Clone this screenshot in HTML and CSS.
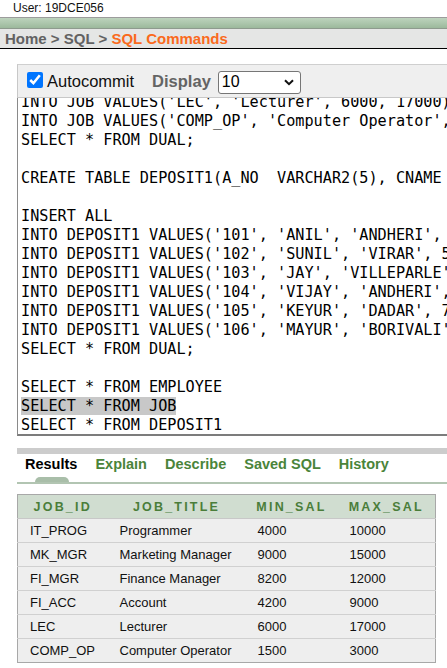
FILE: index.html
```html
<!DOCTYPE html>
<html>
<head>
<meta charset="utf-8">
<link rel="stylesheet" href="styles.css">
</head>
<body>
<div class="user">User: 19DCE056</div>
<div class="greenbar"></div>
<div class="crumbs"><span class="crumb">Home &gt; SQL &gt; </span><span class="crumb-current">SQL Commands</span></div>

<div class="main">
  <div class="toolbar">
    <input type="checkbox" class="check" checked>
    <span class="autocommit">Autocommit</span>
    <span class="display">Display</span>
    <div class="select"><span>10</span><svg class="chev" width="10" height="7" viewBox="0 0 10 7"><path d="M1 1.2 L5 5.2 L9 1.2" fill="none" stroke="#111" stroke-width="2"/></svg></div>
  </div>
  <div class="editor"><pre class="code">INTO JOB VALUES('LEC', 'Lecturer', 6000, 17000)
INTO JOB VALUES('COMP_OP', 'Computer Operator', 1500, 3000)
SELECT * FROM DUAL;

CREATE TABLE DEPOSIT1(A_NO  VARCHAR2(5), CNAME VARCHAR2(15), BNAME VARCHAR2(10))

INSERT ALL
INTO DEPOSIT1 VALUES('101', 'ANIL', 'ANDHERI', 7000, '01-JAN-06')
INTO DEPOSIT1 VALUES('102', 'SUNIL', 'VIRAR', 5000, '15-JUL-06')
INTO DEPOSIT1 VALUES('103', 'JAY', 'VILLEPARLE', 6500, '12-MAR-06')
INTO DEPOSIT1 VALUES('104', 'VIJAY', 'ANDHERI', 8000, '17-SEP-06')
INTO DEPOSIT1 VALUES('105', 'KEYUR', 'DADAR', 7500, '19-NOV-06')
INTO DEPOSIT1 VALUES('106', 'MAYUR', 'BORIVALI', 5500, '21-DEC-06')
SELECT * FROM DUAL;

SELECT * FROM EMPLOYEE
<span class="sel">SELECT * FROM JOB</span>
SELECT * FROM DEPOSIT1</pre></div>

  <div class="tabs-bar"></div>
  <div class="tabs">
    <span class="tab active">Results</span>
    <span class="tab">Explain</span>
    <span class="tab">Describe</span>
    <span class="tab">Saved SQL</span>
    <span class="tab">History</span>
  </div>
  <div class="tab-indicator"></div>
  <div class="tab-line"></div>

  <table class="results">
    <colgroup><col class="c1"><col class="c2"><col class="c3"><col class="c4"></colgroup>
    <thead>
      <tr><th>JOB_ID</th><th>JOB_TITLE</th><th>MIN_SAL</th><th>MAX_SAL</th></tr>
    </thead>
    <tbody>
      <tr><td>IT_PROG</td><td>Programmer</td><td>4000</td><td>10000</td></tr>
      <tr><td>MK_MGR</td><td>Marketing Manager</td><td>9000</td><td>15000</td></tr>
      <tr><td>FI_MGR</td><td>Finance Manager</td><td>8200</td><td>12000</td></tr>
      <tr><td>FI_ACC</td><td>Account</td><td>4200</td><td>9000</td></tr>
      <tr><td>LEC</td><td>Lecturer</td><td>6000</td><td>17000</td></tr>
      <tr><td>COMP_OP</td><td>Computer Operator</td><td>1500</td><td>3000</td></tr>
    </tbody>
  </table>
</div>
</body>
</html>
```
FILE: styles.css
```css
html, body {
  margin: 0;
  padding: 0;
  background: #fff;
  overflow: hidden;
}
body {
  font-family: "Liberation Sans", Arial, sans-serif;
  color: #000;
  width: 447px;
}
.user {
  height: 17px;
  line-height: 17px;
  font-size: 12px;
  padding-left: 13px;
  color: #111;
}
.greenbar {
  height: 10px;
  border-top: 1px solid #9c9c9c;
  border-bottom: 1px solid #8e9a8e;
  background: linear-gradient(#bdd3bd, #9cb99c);
}
.crumbs {
  height: 19px;
  line-height: 19px;
  background: #e5e6e5;
  border-bottom: 1px solid #000;
  padding-left: 5px;
  font-size: 15px;
  font-weight: bold;
  white-space: nowrap;
}
.crumb { color: #626262; }
.crumb-current { color: #fa6a1c; }

.main {
  margin-top: 15px;
  margin-left: 17px;
  width: 430px;
}
.toolbar {
  height: 32px;
  display: flex;
  align-items: center;
  background: #efefef;
  border-top: 1px solid #cfcfcf;
  border-left: 1px solid #c8c8c8;
  border-bottom: 1px solid #c8c8c8;
  padding-left: 9px;
  white-space: nowrap;
}
.check {
  width: 16px;
  height: 16px;
  margin: 0;
  accent-color: #0075ff;
  position: relative;
  top: -1px;
}
.autocommit {
  margin-left: 4px;
  font-size: 16.5px;
  color: #111;
}
.display {
  margin-left: 18px;
  font-size: 16.5px;
  font-weight: bold;
  color: #646464;
}
.select {
  margin-left: 7px;
  width: 83px;
  height: 23px;
  box-sizing: border-box;
  border: 1px solid #767676;
  border-radius: 3px;
  background: #fff;
  display: flex;
  align-items: center;
  justify-content: space-between;
  padding: 0 6px 0 3px;
  font-size: 16px;
  position: relative;
  top: 1px;
}
.chev { display: block; }

.editor {
  height: 336px;
  overflow: hidden;
  border-left: 1px solid #8a8a8a;
  border-bottom: 2px solid #7c7c7c;
  background: #fff;
}
.code {
  margin: -5px 0 0 0;
  padding-left: 3px;
  font-family: "DejaVu Sans Mono", "Liberation Mono", monospace;
  font-size: 15.2px;
  line-height: 19px;
  color: #000;
  white-space: pre;
}
.sel { background: #c8c8c8; }

.tabs-bar {
  margin-top: 12px;
  height: 6px;
  background: #cccccc;
}
.tabs {
  display: flex;
  gap: 18px;
  height: 23px;
  line-height: 20px;
  padding-left: 8px;
  font-size: 14.5px;
  font-weight: bold;
  white-space: nowrap;
}
.tab { color: #4a843a; }
.tab.active { color: #000; }
.tab-indicator {
  margin-left: 18px;
  width: 34px;
  height: 5px;
  border-radius: 5px 5px 0 0;
  background: #a9bea9;
}
.tab-line {
  height: 2px;
  background: #b2c5b2;
}

.results {
  margin-top: 10px;
  width: 418px;
  table-layout: fixed;
  border-collapse: collapse;
  border: 1px solid #a8a8a8;
}
.c1 { width: 90px; }
.c2 { width: 138px; }
.c3 { width: 92px; }
.c4 { width: 98px; }
.results th {
  height: 23px;
  padding: 0;
  background: #d0ddd0;
  color: #4a7d3a;
  font-size: 12.5px;
  font-weight: bold;
  letter-spacing: 2.2px;
  text-align: center;
  border-bottom: 1px solid #c8c8c8;
}
.results td {
  height: 23px;
  padding: 0 0 0 12px;
  background: #eeeeee;
  font-size: 13px;
  color: #111;
  border-top: 1px solid #d0d0d0;
  white-space: nowrap;
}
```
